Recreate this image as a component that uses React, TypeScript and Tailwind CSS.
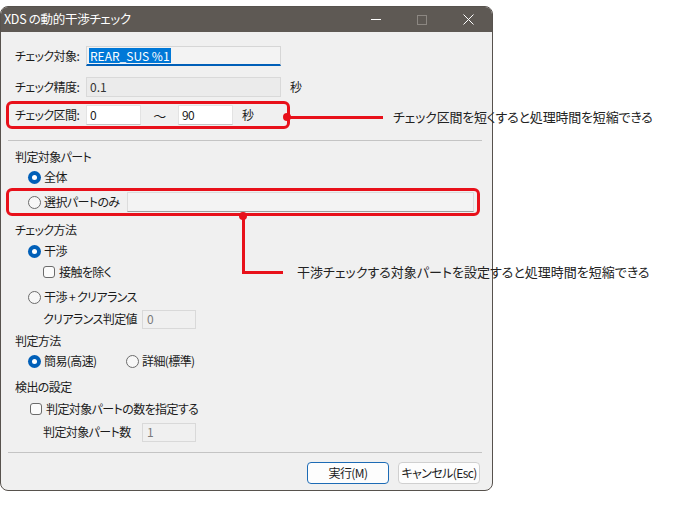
import React from "react";

const FONT = { fontFamily: '"Noto Sans CJK JP", "Noto Sans", sans-serif' };

function Radio({ checked }: { checked?: boolean }) {
  return checked ? (
    <span className="w-[13px] h-[13px] shrink-0 rounded-full bg-[#005fb8] flex items-center justify-center">
      <span className="w-[5px] h-[5px] rounded-full bg-white" />
    </span>
  ) : (
    <span className="w-[13px] h-[13px] shrink-0 rounded-full border border-[#6b6b6b] bg-[#f7f7f7]" />
  );
}

function Check() {
  return <span className="w-[12px] h-[12px] shrink-0 rounded-[3px] border border-[#6b6b6b] bg-[#fbfbfb]" />;
}

export default function App() {
  return (
    <div
      className="relative w-[676px] h-[506px] bg-white overflow-hidden text-[12px] text-[#1b1b1b] whitespace-nowrap [font-feature-settings:'palt']"
      style={FONT}
    >
      {/* Window */}
      <div className="mt-[6px] w-[493px] h-[485px] border border-[#57524d] rounded-[8px] overflow-hidden bg-[#f0f0f0] flex flex-col">
        {/* Title bar */}
        <div className="h-[25px] shrink-0 bg-[#5e5954] flex items-center text-white">
          <span className="ml-[3px] text-[12.5px] leading-none tracking-[-0.3px]">XDS の動的干渉チェック</span>
          <div className="ml-auto flex items-center h-full">
            <div className="w-[46px] h-full flex items-center justify-center">
              <span className="w-[10px] h-px bg-white" />
            </div>
            <div className="w-[46px] h-full flex items-center justify-center">
              <span className="w-[10px] h-[10px] border border-[#8c8782]" />
            </div>
            <div className="w-[46px] h-full flex items-center justify-center mr-[1px]">
              <svg width="11" height="11" viewBox="0 0 11 11">
                <path d="M0.5 0.5 L10.5 10.5 M10.5 0.5 L0.5 10.5" stroke="white" strokeWidth="1" />
              </svg>
            </div>
          </div>
        </div>

        {/* Body */}
        <div className="flex flex-col leading-none tracking-[-0.6px]">
          {/* チェック対象 */}
          <div className="mt-[14px] h-[20px] ml-[14px] flex items-center">
            <span className="w-[71px]">チェック対象:</span>
            <div className="w-[195px] h-[20px] bg-[#f3f3f3] border border-[#d6d6d6] border-b-2 border-b-[#005fb8] flex items-center pl-[2px]">
              <span className="bg-[#0078d7] text-white px-[1px] h-[15px] flex items-center tracking-normal">REAR_SUS %1</span>
            </div>
          </div>

          {/* チェック精度 */}
          <div className="mt-[11px] h-[20px] ml-[14px] flex items-center">
            <span className="w-[71px]">チェック精度:</span>
            <div className="w-[195px] h-[20px] bg-[#ebebeb] border border-[#d9d9d9] flex items-center pl-[3px] text-[#333] tracking-normal">
              0.1
            </div>
            <span className="ml-[9px]">秒</span>
          </div>

          {/* チェック区間 (red box) */}
          <div className="mt-[4px] ml-[5px] w-[284px] h-[28px] border-[3px] border-[#e8101a] rounded-[6px] pl-[6px] flex items-center">
            <span className="w-[71px]">チェック区間:</span>
            <div className="w-[55px] h-[20px] bg-white border border-[#e3e3e3] border-b-[#c4c4c4] flex items-center pl-[3px]">0</div>
            <span className="w-[37px] text-center text-[13px]">～</span>
            <div className="w-[55px] h-[20px] bg-white border border-[#e3e3e3] border-b-[#c4c4c4] flex items-center pl-[3px]">90</div>
            <span className="ml-[9px]">秒</span>
          </div>

          {/* separator */}
          <div className="mt-[11px] ml-[7px] w-[474px] h-px bg-[#c4c4c4]" />

          {/* 判定対象パート */}
          <div className="mt-[6px] h-[20px] ml-[14px] flex items-center">判定対象パート</div>
          <div className="h-[20px] ml-[27px] flex items-center gap-[3px]">
            <Radio checked />
            <span>全体</span>
          </div>

          {/* 選択パートのみ (red box) */}
          <div className="mt-[1px] ml-[5px] w-[474px] h-[28px] border-[3px] border-[#e8101a] rounded-[6px] pl-[19px] flex items-center">
            <div className="w-[99px] flex items-center gap-[3px]">
              <Radio />
              <span>選択パートのみ</span>
            </div>
            <div className="w-[347px] h-[20px] bg-[#f3f3f3] border border-[#dcdcdc] border-b-[#9d9d9d]" />
          </div>

          {/* チェック方法 */}
          <div className="mt-[4px] h-[20px] ml-[14px] flex items-center">チェック方法</div>
          <div className="mt-[1px] h-[20px] ml-[27px] flex items-center gap-[3px]">
            <Radio checked />
            <span>干渉</span>
          </div>
          <div className="mt-[1px] h-[20px] ml-[42px] flex items-center gap-[4px]">
            <Check />
            <span>接触を除く</span>
          </div>
          <div className="mt-[5px] h-[20px] ml-[27px] flex items-center gap-[3px]">
            <Radio />
            <span>干渉 + クリアランス</span>
          </div>
          <div className="mt-[2px] h-[20px] ml-[42px] flex items-center">
            <span className="w-[99px]">クリアランス判定値</span>
            <div className="w-[54px] h-[19px] bg-[#f0f0f0] border border-[#d9d9d9] flex items-center pl-[4px] text-[#7a7a7a]">0</div>
          </div>

          {/* 判定方法 */}
          <div className="mt-[2px] h-[20px] ml-[14px] flex items-center">判定方法</div>
          <div className="h-[20px] ml-[27px] flex items-center">
            <div className="w-[98px] flex items-center gap-[3px]">
              <Radio checked />
              <span>簡易(高速)</span>
            </div>
            <div className="flex items-center gap-[3px]">
              <Radio />
              <span>詳細(標準)</span>
            </div>
          </div>

          {/* 検出の設定 */}
          <div className="mt-[6px] h-[20px] ml-[14px] flex items-center">検出の設定</div>
          <div className="mt-[2px] h-[20px] ml-[29px] flex items-center gap-[4px]">
            <Check />
            <span>判定対象パートの数を指定する</span>
          </div>
          <div className="mt-[3px] h-[20px] ml-[42px] flex items-center">
            <span className="w-[99px]">判定対象パート数</span>
            <div className="w-[54px] h-[19px] bg-[#f0f0f0] border border-[#d9d9d9] flex items-center pl-[4px] text-[#7a7a7a]">1</div>
          </div>

          {/* separator */}
          <div className="mt-[10px] ml-[7px] w-[474px] h-px bg-[#c4c4c4]" />

          {/* Buttons */}
          <div className="mt-[9px] h-[22px] flex justify-end gap-[9px] mr-[12px]">
            <button className="w-[82px] h-[22px] rounded-[4px] border-[1.5px] border-[#1d6bb5] bg-[#fdfdfd] flex items-center justify-center">
              実行(M)
            </button>
            <button className="w-[82px] h-[22px] px-0 rounded-[4px] border border-[#d0d0d0] bg-[#fdfdfd] flex items-center justify-center">
              キャンセル(Esc)
            </button>
          </div>
        </div>
      </div>

      {/* Annotation 1 */}
      <span className="absolute left-[283px] top-[113px] w-[8px] h-[8px] rounded-full bg-[#e8101a]" />
      <span className="absolute left-[287px] top-[116px] w-[96px] h-[3px] bg-[#e8101a]" />
      <span className="absolute left-[393px] top-[108px] h-[18px] flex items-center text-[13px] text-[#222] tracking-[-0.2px]">
        チェック区間を短くすると処理時間を短縮できる
      </span>

      {/* Annotation 2 */}
      <span className="absolute left-[239px] top-[212px] w-[8px] h-[8px] rounded-full bg-[#e8101a]" />
      <span className="absolute left-[242px] top-[216px] w-[3px] h-[58px] bg-[#e8101a]" />
      <span className="absolute left-[242px] top-[271px] w-[41px] h-[3px] bg-[#e8101a]" />
      <span className="absolute left-[297px] top-[263px] h-[18px] flex items-center text-[13px] text-[#222]">
        干渉チェックする対象パートを設定すると処理時間を短縮できる
      </span>
    </div>
  );
}
